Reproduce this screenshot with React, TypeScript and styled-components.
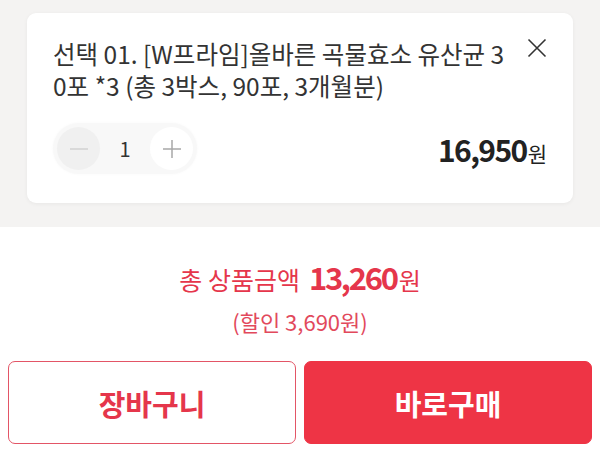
import React from 'react'
import styled, { createGlobalStyle } from 'styled-components'

const GlobalStyle = createGlobalStyle`
  html, body {
    margin: 0;
    padding: 0;
    background: #ffffff;
  }
  body {
    font-family: "Noto Sans CJK KR", "Noto Sans", sans-serif;
    color: #333333;
  }
`

const App = () => {
  return (
    <Root>
      <GlobalStyle />
      <OptionArea>
        <OptionCard>
          <TitleRow>
            <OptionTitle>
              선택 01. [W프라임]올바른 곡물효소 유산균 30포 *3 (총 3박스, 90포, 3개월분)
            </OptionTitle>
            <CloseButton aria-label="삭제">
              <svg width="20" height="20" viewBox="0 0 20 20">
                <path d="M1.5 1.5 L18.5 18.5 M18.5 1.5 L1.5 18.5" stroke="#333" strokeWidth="1.6" fill="none" />
              </svg>
            </CloseButton>
          </TitleRow>
          <BottomRow>
            <Stepper>
              <StepButton $tone="off">
                <svg width="20" height="20" viewBox="0 0 20 20">
                  <path d="M1 10 H19" stroke="#d2d2d2" strokeWidth="1.5" />
                </svg>
              </StepButton>
              <Quantity>1</Quantity>
              <StepButton $tone="on">
                <svg width="20" height="20" viewBox="0 0 20 20">
                  <path d="M1 10 H19 M10 1 V19" stroke="#a8a8a8" strokeWidth="1.5" />
                </svg>
              </StepButton>
            </Stepper>
            <Price>
              <PriceNumber>16,950</PriceNumber>
              <PriceUnit>원</PriceUnit>
            </Price>
          </BottomRow>
        </OptionCard>
      </OptionArea>
      <Summary>
        <TotalLine>
          <TotalLabel>총 상품금액</TotalLabel>
          <TotalNumber>13,260</TotalNumber>
          <TotalUnit>원</TotalUnit>
        </TotalLine>
        <Discount>(할인 3,690원)</Discount>
        <Actions>
          <ActionButton $variant="outline">장바구니</ActionButton>
          <ActionButton $variant="solid">바로구매</ActionButton>
        </Actions>
      </Summary>
    </Root>
  )
}

const Root = styled.div`
  width: 600px;
  height: 455px;
  overflow: hidden;
  background: #ffffff;
`
const OptionArea = styled.div`
  background: #f4f3f2;
  padding: 13px 27px 24px 27px;
`
const OptionCard = styled.div`
  background: #ffffff;
  border-radius: 9px;
  box-shadow: 0 1px 4px rgba(0, 0, 0, 0.05);
  height: 190px;
  box-sizing: border-box;
  padding: 25px 26px 0 26px;
  display: flex;
  flex-direction: column;
`
const TitleRow = styled.div`
  display: flex;
  align-items: flex-start;
  justify-content: space-between;
`
const OptionTitle = styled.div`
  width: 458px;
  font-size: 24.5px;
  line-height: 32px;
  color: #333333;
  word-break: break-all;
`
const CloseButton = styled.button`
  border: 0;
  background: none;
  padding: 0;
  margin: 0 0 0 0;
  width: 20px;
  height: 20px;
  display: flex;
  cursor: pointer;
`
const BottomRow = styled.div`
  margin-top: 21px;
  display: flex;
  align-items: center;
  justify-content: space-between;
`
const Stepper = styled.div`
  display: flex;
  align-items: center;
  padding: 4px;
  background: #f8f8f8;
  border-radius: 26px;
  box-shadow: 0 0 3px rgba(0, 0, 0, 0.03);
`
const StepButton = styled.button<{ $tone: 'on' | 'off' }>`
  width: 43px;
  height: 43px;
  border-radius: 50%;
  border: 0;
  padding: 0;
  display: flex;
  align-items: center;
  justify-content: center;
  background: ${(p) => (p.$tone === 'on' ? '#ffffff' : '#f0f0f0')};
`
const Quantity = styled.span`
  width: 50px;
  text-align: center;
  font-size: 20px;
  color: #333333;
`
const Price = styled.div`
  display: flex;
  align-items: baseline;
  color: #222222;
`
const PriceNumber = styled.span`
  font-size: 30px;
  font-weight: 700;
  letter-spacing: -1.6px;
`
const PriceUnit = styled.span`
  font-size: 21px;
  margin-left: 1px;
`
const Summary = styled.div`
  padding: 28px 8px 0 8px;
  display: flex;
  flex-direction: column;
  align-items: center;
`
const TotalLine = styled.div`
  display: flex;
  align-items: baseline;
  color: #e5364b;
  height: 44px;
  line-height: 44px;
`
const TotalLabel = styled.span`
  font-size: 25px;
  margin-right: 9px;
`
const TotalNumber = styled.span`
  font-size: 31px;
  font-weight: 700;
  letter-spacing: -2.3px;
`
const TotalUnit = styled.span`
  font-size: 24px;
  margin-left: 2px;
`
const Discount = styled.div`
  margin-top: 7px;
  font-size: 22px;
  line-height: 30px;
  color: #e2495c;
`
const Actions = styled.div`
  margin-top: 25px;
  width: 100%;
  display: grid;
  grid-template-columns: 1fr 1fr;
  gap: 8px;
`
const ActionButton = styled.button<{ $variant: 'outline' | 'solid' }>`
  height: 83px;
  border-radius: 7px;
  font-family: "Noto Sans CJK KR", sans-serif;
  font-size: 29px;
  font-weight: 700;
  border: 1.5px solid ${(p) => (p.$variant === 'solid' ? '#ee3445' : '#e35566')};
  background: ${(p) => (p.$variant === 'solid' ? '#ee3445' : '#ffffff')};
  color: ${(p) => (p.$variant === 'solid' ? '#ffffff' : '#e5364b')};
`

export default App
